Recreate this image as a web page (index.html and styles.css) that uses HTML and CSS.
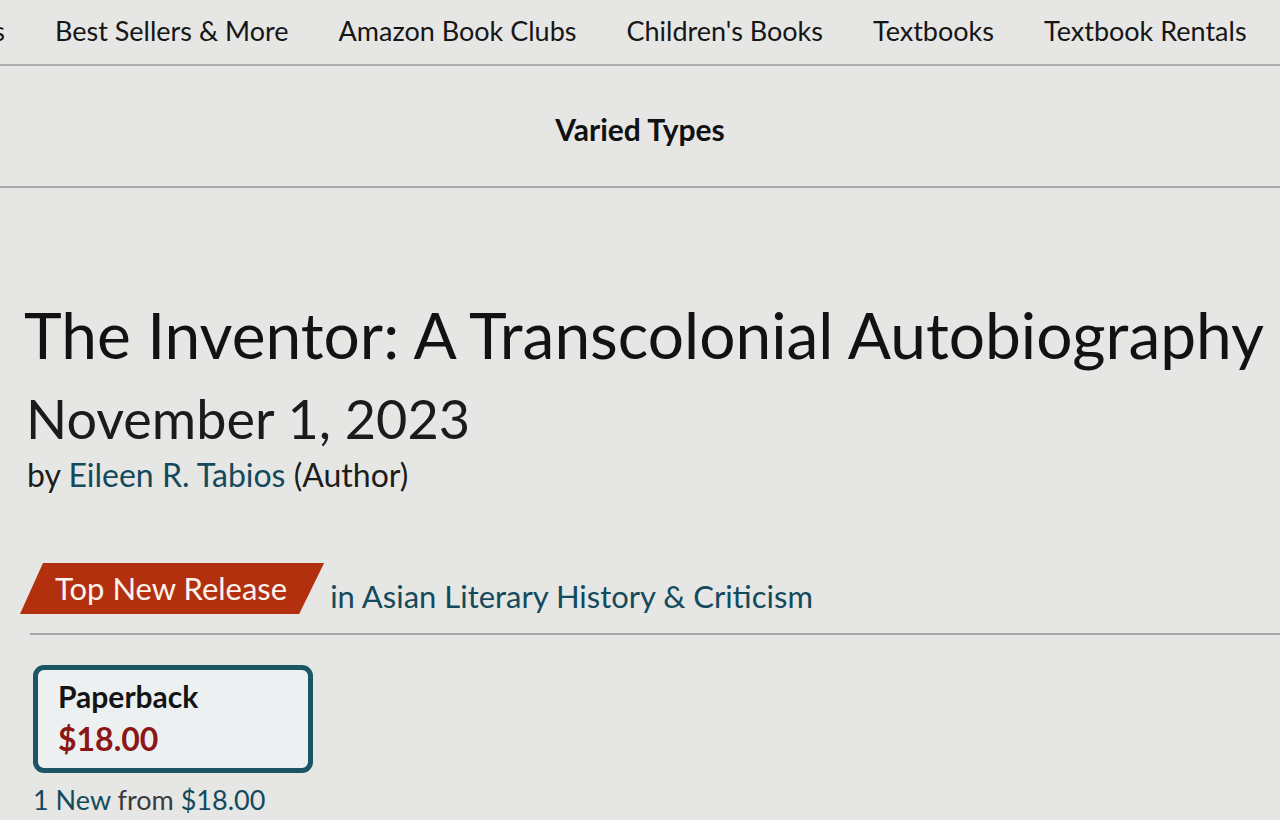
FILE: index.html
```html
<!DOCTYPE html>
<html lang="en">
<head>
<meta charset="utf-8">
<title>The Inventor: A Transcolonial Autobiography</title>
<link rel="stylesheet" href="styles.css">
</head>
<body>
<nav class="subnav">
  <a class="nav-item nav-cut">s</a>
  <a class="nav-item">Best Sellers &amp; More</a>
  <a class="nav-item">Amazon Book Clubs</a>
  <a class="nav-item">Children's Books</a>
  <a class="nav-item">Textbooks</a>
  <a class="nav-item">Textbook Rentals</a>
</nav>
<div class="band">
  <span class="band-title">Varied Types</span>
</div>
<main class="product">
  <h1 class="title">The Inventor: A Transcolonial Autobiography</h1>
  <div class="date">November 1, 2023</div>
  <div class="byline">by <a class="link">Eileen R. Tabios</a> (Author)</div>
  <div class="badge-row">
    <span class="badge">Top New Release</span>
    <a class="link badge-cat">in Asian Literary History &amp; Criticism</a>
  </div>
  <div class="divider"></div>
  <div class="formats">
    <div class="format-card">
      <div class="format-name">Paperback</div>
      <div class="format-price">$18.00</div>
    </div>
    <div class="offers"><a class="link">1 New</a> <span class="muted">from</span> <a class="link">$18.00</a></div>
  </div>
</main>
</body>
</html>
```

FILE: styles.css
```css
* { box-sizing: border-box; }
html, body { margin: 0; padding: 0; }
body {
  background: #e6e6e5;
  color: #141414;
  font-family: Lato, "Liberation Sans", sans-serif;
  width: 1280px;
  height: 820px;
  overflow: hidden;
}
a { color: inherit; text-decoration: none; }

.subnav {
  display: flex;
  align-items: center;
  gap: 50px;
  height: 66px;
  padding-bottom: 4px;
  border-bottom: 2px solid #acacac;
  white-space: nowrap;
  font-size: 27px;
  color: #161616;
}
.nav-cut {
  display: block;
  width: 5px;
  overflow: hidden;
  direction: rtl;
}

.band {
  height: 122px;
  padding-top: 6px;
  display: flex;
  align-items: center;
  justify-content: center;
  border-bottom: 2px solid #a9a9a9;
}
.band-title {
  font-weight: 700;
  font-size: 30px;
  color: #111;
}

.product {
  padding: 109px 0 0 24px;
}
.title {
  margin: 0;
  font-weight: 400;
  font-size: 64px;
  line-height: 76px;
  color: #121212;
  white-space: nowrap;
}
.date {
  font-size: 54px;
  line-height: 60px;
  margin-top: 16px;
  padding-left: 2px;
  color: #1b1b1b;
}
.byline {
  font-size: 32px;
  line-height: 38px;
  margin-top: 7px;
  padding-left: 3px;
  color: #1c1c1c;
}
.link { color: #134a5c; }

.badge-row {
  display: flex;
  align-items: flex-start;
  gap: 8px;
  height: 51px;
  margin-top: 69px;
  margin-left: -4px;
  white-space: nowrap;
}
.badge {
  display: block;
  background: #b3300f;
  color: #fbf3ee;
  font-size: 31px;
  height: 51px;
  line-height: 51px;
  padding: 0 37px 0 35px;
  clip-path: polygon(23px 0, 100% 0, calc(100% - 25px) 100%, 0 100%);
}
.badge-cat {
  font-size: 31px;
  line-height: 51px;
  margin-top: 8px;
  margin-left: -2px;
}
.divider {
  margin-top: 19px;
  margin-left: 6px;
  border-top: 2px solid #a6a6a6;
}

.formats {
  padding-left: 9px;
  padding-top: 30px;
}
.format-card {
  width: 280px;
  height: 108px;
  border: 5px solid #1c5564;
  border-radius: 11px;
  background: #edf0f0;
  padding: 8px 0 0 20px;
}
.format-name {
  font-weight: 700;
  font-size: 30px;
  line-height: 36px;
  color: #141414;
}
.format-price {
  font-weight: 700;
  font-size: 32px;
  line-height: 36px;
  margin-top: 7px;
  color: #8c1515;
}
.offers {
  font-size: 27px;
  line-height: 32px;
  margin-top: 11px;
}
.muted { color: #3a3a3a; }
```
